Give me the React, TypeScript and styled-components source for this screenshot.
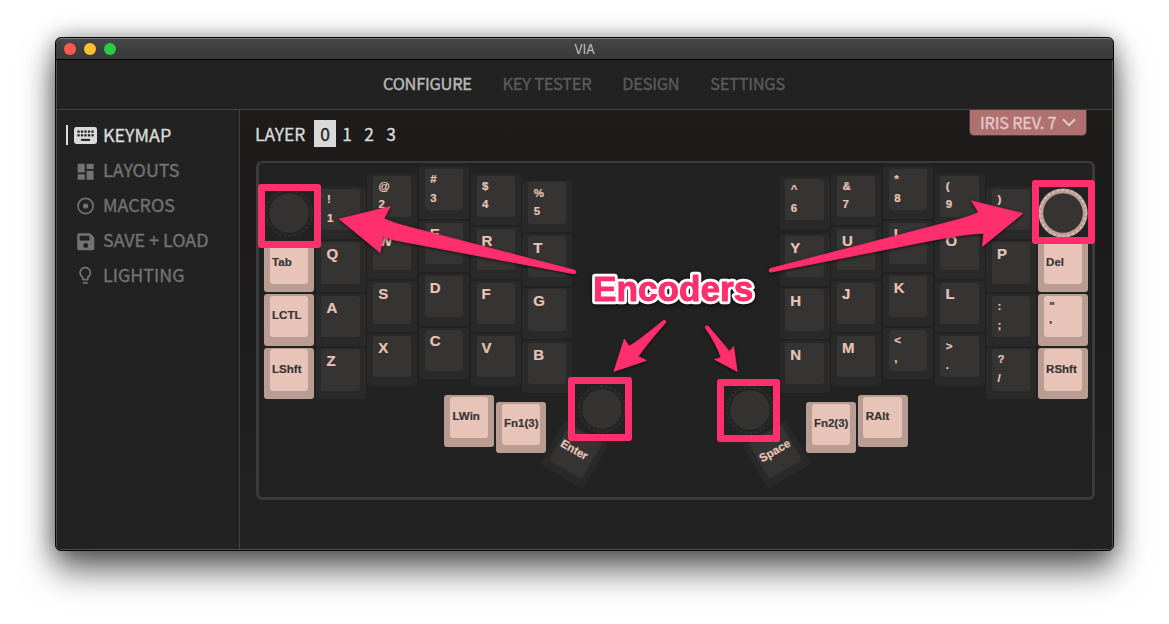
import React from "react";
import styled, { createGlobalStyle, css } from "styled-components";
import { MdDashboard, MdLightbulbOutline } from "react-icons/md";
import { FaSave } from "react-icons/fa";

const PINK = "#ff2e6d";
const UI_FONT = '"Noto Sans CJK SC", "Noto Sans", sans-serif';
const KEY_FONT = '"Liberation Sans", Arial, sans-serif';

const GlobalStyle = createGlobalStyle`
  * { box-sizing: border-box; }
  html, body { margin: 0; padding: 0; background: #fff; overflow: hidden; }
  body { font-family: ${UI_FONT}; }
`;

const Stage = styled.div`
  position: relative;
  width: 1169px;
  height: 624px;
  padding: 37px 55px;
  overflow: hidden;
  background: #fff;
`;

const Window = styled.div`
  width: 1059px;
  height: 514px;
  display: flex;
  flex-direction: column;
  border: 1px solid #060606;
  border-radius: 6px;
  background: #222;
  box-shadow: 0 19px 34px rgba(0, 0, 0, 0.6), 0 0 22px rgba(0, 0, 0, 0.34);
  overflow: hidden;
`;

const TitleBar = styled.div`
  display: flex;
  align-items: center;
  flex: none;
  gap: 8px;
  height: 22px;
  padding: 0 8px;
  border-top: 1px solid #7b7c7c;
  border-bottom: 1px solid #000;
  background: linear-gradient(#444647, #373839);
  border-radius: 5px 5px 0 0;
`;

const Light = styled.span<{ $color: string }>`
  width: 12px;
  height: 12px;
  border-radius: 50%;
  background: ${(p) => p.$color};
`;

const Title = styled.span`
  flex: 1;
  padding: 1px 60px 0 0;
  text-align: center;
  color: #c4c5c5;
  font: 12.5px/20px Inter, "Liberation Sans", sans-serif;
`;

const Frame = styled.div`
  flex: 1;
  display: flex;
  flex-direction: column;
  border: 1px solid #4c4d4d;
  border-top: 0;
  border-radius: 0 0 5px 5px;
  overflow: hidden;
`;

const Nav = styled.nav`
  flex: none;
  display: flex;
  gap: 30.8px;
  height: 50px;
  padding-left: 326px;
  border-bottom: 1px solid #444;
`;

const NavItem = styled.a<{ $active?: boolean }>`
  font-size: 16.4px;
  line-height: 47px;
  white-space: nowrap;
  letter-spacing: -0.25px;
  color: ${(p) => (p.$active ? "#b9b9b9" : "#5a5a5a")};
  -webkit-text-stroke: 0.4px currentColor;
`;

const Main = styled.div`
  flex: 1;
  display: flex;
`;

const Sidebar = styled.aside`
  width: 183px;
  padding-top: 8px;
  border-right: 1px solid #444;
  background: #222;
`;

const SideItem = styled.div<{ $active?: boolean }>`
  display: flex;
  align-items: center;
  height: 35px;
  padding-left: 9px;
  color: ${(p) => (p.$active ? "#dadada" : "#747272")};
`;

const Marker = styled.span<{ $active?: boolean }>`
  width: 2px;
  height: 20px;
  margin-top: -1px;
  background: ${(p) => (p.$active ? "#dadada" : "transparent")};
`;

const IconSlot = styled.span<{ $drop: number }>`
  display: flex;
  align-items: center;
  justify-content: center;
  width: 35px;
  height: 22px;
  margin-top: ${(p) => p.$drop}px;
`;

const SideLabel = styled.span`
  padding-bottom: 3px;
  font-size: 17.9px;
  line-height: 32px;
  -webkit-text-stroke: 0.35px currentColor;
`;

const Content = styled.main`
  flex: 1;
  padding-left: 16px;
  background: linear-gradient(#1e1b1b, #1c1a1a 100px, #1f1e1e 60%, #222);
`;

const TopRow = styled.div`
  display: flex;
  align-items: flex-start;
  height: 51px;
  padding-right: 25px;
`;

const Layers = styled.div`
  display: flex;
  padding-top: 10px;
  font-size: 17.4px;
  line-height: 27px;
  color: #d9d9d9;
  -webkit-text-stroke: 0.35px currentColor;
`;

const LayerLabel = styled.span`
  width: 59px;
  margin-left: -1px;
`;

const LayerButton = styled.span<{ $active?: boolean }>`
  width: 22px;
  height: 27px;
  text-align: center;
  color: ${(p) => (p.$active ? "#1f1e1e" : "#d9d9d9")};
  background: ${(p) => (p.$active ? "#d9d9d9" : "transparent")};
`;

const Device = styled.div`
  display: flex;
  align-items: center;
  gap: 6px;
  width: 118px;
  height: 26px;
  margin-left: auto;
  padding: 0 0 1px 10px;
  border: 1px solid #4a3c3c;
  border-top: 0;
  border-radius: 0 0 5px 5px;
  background: #b07070;
  color: #e0c8c6;
  font-size: 16.3px;
  letter-spacing: -0.2px;
  line-height: 22px;
  white-space: nowrap;
  -webkit-text-stroke: 0.35px currentColor;
  span { padding-bottom: 1px; }
`;

const Board = styled.div`
  width: 839px;
  height: 339px;
  padding: 3.4px 4px 0 5px;
  border: 3px solid #3b3b3b;
  border-top-width: 2px;
  border-radius: 6px;
  background: #222;
`;

const KeyArea = styled.div`
  display: flex;
  justify-content: space-between;
  height: 228.8px;
`;

const Half = styled.div`
  display: flex;
  align-items: flex-start;
  gap: 1.7px;
`;

const Column = styled.div<{ $top: number; $split?: number }>`
  display: flex;
  flex-direction: column;
  gap: 2.1px;
  padding-top: ${(p) => p.$top}px;
  > :first-child { margin-bottom: ${(p) => p.$split ?? 0}px; }
`;

const ThumbRow = styled.div`
  display: flex;
  align-items: flex-start;
  padding-left: 180.4px;
`;

const Thumb = styled.div<{ $gap?: number; $drop?: number; $rot?: number }>`
  flex: none;
  margin: ${(p) => p.$drop ?? 0}px 0 0 ${(p) => p.$gap ?? 0}px;
  transform: ${(p) => (p.$rot ? `rotate(${p.$rot}deg)` : "none")};
`;

const pinkKey = css`
  background: #b99d92;
  color: #363434;
`;
const darkKey = css`
  background: #292929;
  color: #e8c4b8;
`;

const KeyBox = styled.div<{ $pink?: boolean }>`
  flex: none;
  width: 50px;
  height: 51.4px;
  padding: 1.7px 6px 0 5.8px;
  border-radius: 3px;
  ${(p) => (p.$pink ? pinkKey : darkKey)}
`;

const Cap = styled.div<{ $pink?: boolean; $kind: "pair" | "letter" | "word" }>`
  display: flex;
  flex-direction: column;
  height: 41.2px;
  border-radius: 3px;
  background: ${(p) => (p.$pink ? "#e8c4b8" : "#363433")};
  font-family: ${KEY_FONT};
  font-weight: bold;
  white-space: pre;
  -webkit-text-stroke: 0.2px currentColor;
  ${(p) =>
    p.$kind === "pair"
      ? "padding: 1.1px 0 0 5.4px; font-size: 11.5px; line-height: 18.7px;"
      : p.$kind === "letter"
        ? "padding: 1.8px 0 0 5px; font-size: 15px; line-height: 20px;"
        : "padding: 9.4px 0 0 2.3px; font-size: 11.5px; line-height: 20px;"}
`;

const EncoderSlot = styled.div`
  position: relative;
  z-index: 1;
  width: 50px;
  height: 51.4px;
  svg { display: block; }
`;

const Highlight = styled.div<{ $x: number; $y: number }>`
  position: absolute;
  left: ${(p) => p.$x}px;
  top: ${(p) => p.$y}px;
  z-index: 2;
  width: 63.4px;
  height: 63.6px;
  border: 7px solid ${PINK};
  border-radius: 3px;
`;

const Arrows = styled.svg`
  position: absolute;
  left: 0;
  top: 0;
  z-index: 2;
  filter: drop-shadow(0 1px 1.5px rgba(0, 0, 0, 0.65));
`;

const CalloutLayer = styled.svg`
  position: absolute;
  left: 580px;
  top: 262px;
  z-index: 3;
  filter: drop-shadow(0 1px 2px rgba(0, 0, 0, 0.7));
  text {
    font: bold 35.2px ${KEY_FONT};
    stroke-linejoin: round;
  }
`;

function Key({ label, pink }: { label: string | [string, string]; pink?: boolean }) {
  const kind = Array.isArray(label) ? "pair" : label.length === 1 ? "letter" : "word";
  const legends = Array.isArray(label) ? label : [label];
  return (
    <KeyBox $pink={pink}>
      <Cap $pink={pink} $kind={kind}>
        {legends.map((text, i) => <span key={i}>{text}</span>)}
      </Cap>
    </KeyBox>
  );
}

function Encoder({ pink }: { pink?: boolean }) {
  return (
    <EncoderSlot>
      <svg width="50" height="52" viewBox="0 0 50 52">
        <circle cx="25" cy="26" r="24.6" fill={pink ? "#b99d92" : "#242424"} />
        <circle
          cx="25"
          cy="26"
          r="23"
          fill="none"
          stroke={pink ? "#dcbcb0" : "#313030"}
          strokeWidth="2"
          strokeDasharray="2.6 2.22"
        />
        <circle cx="25" cy="26" r="19.8" fill={pink ? "#353433" : "#343332"} />
      </svg>
    </EncoderSlot>
  );
}

type ColumnData = { top: number; split?: number; keys: (string | [string, string])[] };

const leftColumns: ColumnData[] = [
  { top: 20.8, keys: [["!", "1"], "Q", "A", "Z"] },
  { top: 7.6, keys: [["@", "2"], "W", "S", "X"] },
  { top: 1, keys: [["#", "3"], "E", "D", "C"] },
  { top: 7.6, keys: [["$", "4"], "R", "F", "V"] },
  { top: 14.4, keys: [["%", "5"], "T", "G", "B"] },
];

const rightColumns: ColumnData[] = [
  { top: 10.8, split: 3.6, keys: [["^", "6"], "Y", "H", "N"] },
  { top: 7.6, keys: [["&", "7"], "U", "J", "M"] },
  { top: 1, keys: [["*", "8"], "I", "K", ["<", ","]] },
  { top: 7.6, keys: [["(", "9"], "O", "L", [">", "."]] },
  { top: 20.8, keys: [[")", "0"], "P", [":", ";"], ["?", "/"]] },
];

const KeyboardIcon = () => (
  <svg width="23" height="17" viewBox="0 0 23 17">
    <rect width="23" height="17" rx="2.4" fill="currentColor" />
    <g fill="#222">
      {[0, 1, 2, 3, 4].map((i) => (
        <React.Fragment key={i}>
          <rect x={3.4 + i * 3.5} y="3.5" width="2.3" height="2.2" />
          <rect x={3.4 + i * 3.5} y="7.2" width="2.3" height="2.2" />
        </React.Fragment>
      ))}
      <rect x="7" y="11.9" width="9" height="2" />
    </g>
  </svg>
);

const TargetIcon = () => (
  <svg width="18" height="18" viewBox="0 0 18 18">
    <circle cx="8.6" cy="9" r="7.6" fill="none" stroke="currentColor" strokeWidth="1.7" />
    <circle cx="8.6" cy="9" r="2.6" fill="currentColor" />
  </svg>
);

const sideItems = [
  { label: "KEYMAP", drop: 0, icon: <KeyboardIcon />, active: true },
  { label: "LAYOUTS", drop: 2, icon: <MdDashboard size={21.3} /> },
  { label: "MACROS", drop: 0, icon: <TargetIcon /> },
  { label: "SAVE + LOAD", drop: 3, icon: <FaSave size={19.5} /> },
  { label: "LIGHTING", drop: 0, icon: <MdLightbulbOutline size={20.5} /> },
];

export default function App() {
  return (
    <Stage>
      <GlobalStyle />
      <Window>
        <TitleBar>
          <Light $color="#ff5850" />
          <Light $color="#ffbf2f" />
          <Light $color="#28cc41" />
          <Title>VIA</Title>
        </TitleBar>
        <Frame>
          <Nav>
            <NavItem $active>CONFIGURE</NavItem>
            <NavItem>KEY TESTER</NavItem>
            <NavItem>DESIGN</NavItem>
            <NavItem>SETTINGS</NavItem>
          </Nav>
          <Main>
            <Sidebar>
              {sideItems.map((item) => (
                <SideItem key={item.label} $active={item.active}>
                  <Marker $active={item.active} />
                  <IconSlot $drop={item.drop}>{item.icon}</IconSlot>
                  <SideLabel>{item.label}</SideLabel>
                </SideItem>
              ))}
            </Sidebar>
            <Content>
              <TopRow>
                <Layers>
                  <LayerLabel>LAYER</LayerLabel>
                  {["0", "1", "2", "3"].map((n) => (
                    <LayerButton key={n} $active={n === "0"}>{n}</LayerButton>
                  ))}
                </Layers>
                <Device>
                  <span>IRIS REV. 7</span>
                  <svg width="14" height="9" viewBox="0 0 14 9">
                    <path d="M1 1.2 7 7.2 13 1.2" fill="none" stroke="currentColor" strokeWidth="2.1" />
                  </svg>
                </Device>
              </TopRow>
              <Board>
                <KeyArea>
                  <Half>
                    <Column $top={20.8}>
                      <Encoder />
                      <Key label="Tab" pink />
                      <Key label="LCTL" pink />
                      <Key label="LShft" pink />
                    </Column>
                    {leftColumns.map((c, i) => (
                      <Column key={i} $top={c.top}>
                        {c.keys.map((k, j) => <Key key={j} label={k} />)}
                      </Column>
                    ))}
                  </Half>
                  <Half>
                    {rightColumns.map((c, i) => (
                      <Column key={i} $top={c.top} $split={c.split}>
                        {c.keys.map((k, j) => <Key key={j} label={k} />)}
                      </Column>
                    ))}
                    <Column $top={20.8}>
                      <Encoder pink />
                      <Key label="Del" pink />
                      <Key label={['"', "'"]} pink />
                      <Key label="RShft" pink />
                    </Column>
                  </Half>
                </KeyArea>
                <ThumbRow>
                  <Thumb><Key label="LWin" pink /></Thumb>
                  <Thumb $gap={1.5} $drop={6.8}><Key label="Fn1(3)" pink /></Thumb>
                  <Thumb $gap={3.5} $drop={33.5} $rot={30}><Key label="Enter" /></Thumb>
                  <Thumb $gap={-22.6} $drop={-12}><Encoder /></Thumb>
                  <Thumb $gap={98.4} $drop={-11}><Encoder /></Thumb>
                  <Thumb $gap={-23.4} $drop={33.7} $rot={-30}><Key label="Space" /></Thumb>
                  <Thumb $gap={4} $drop={6.8}><Key label="Fn2(3)" pink /></Thumb>
                  <Thumb $gap={1.8}><Key label="RAlt" pink /></Thumb>
                </ThumbRow>
              </Board>
            </Content>
          </Main>
        </Frame>
      </Window>
      <Highlight $x={257.7} $y={184.2} />
      <Highlight $x={1031.6} $y={180.2} />
      <Highlight $x={568.4} $y={377.3} />
      <Highlight $x={717} $y={378.8} />
      <Arrows width="1169" height="624" viewBox="0 0 1169 624">
        <g fill={PINK} stroke={PINK} strokeWidth="0.8" strokeLinejoin="round">
          <path d="M339.3 219 390.2 206.6 384 218.5Q391 222.5 410 227.2L575 270.3Q577.4 272.6 574.5 273.9L410 243Q390 239.8 383.2 236.6L380 252.6Z" />
          <path d="M1022.8 213.4 971.6 200.9 978.6 212.3Q974 215.5 950 221.7L770 268.6Q767.6 271 770.5 272.2L930 240.8Q970 233 983.8 233.4L982.4 246.5Z" />
          <path d="M613.9 371.5 624.3 339 629 346.3Q637 342 663.4 320.4Q666.4 319.9 665.8 322.4Q646 345 638.2 356.6L646.4 360.4Z" />
          <path d="M737.2 371.5 714.6 359.5 721 357.5Q717 345 705.2 327.6Q705.3 325.2 708 326.1Q721 341 729.4 351.4L733.6 346.6Z" />
        </g>
      </Arrows>
      <CalloutLayer width="190" height="52" viewBox="0 0 190 52">
        <text x="13" y="39.2" fill={PINK} stroke="#fff" strokeWidth="6.4" paintOrder="stroke">
          Encoders
        </text>
        <text x="13" y="39.2" fill={PINK} stroke={PINK} strokeWidth="0.9" aria-hidden>
          Encoders
        </text>
      </CalloutLayer>
    </Stage>
  );
}
